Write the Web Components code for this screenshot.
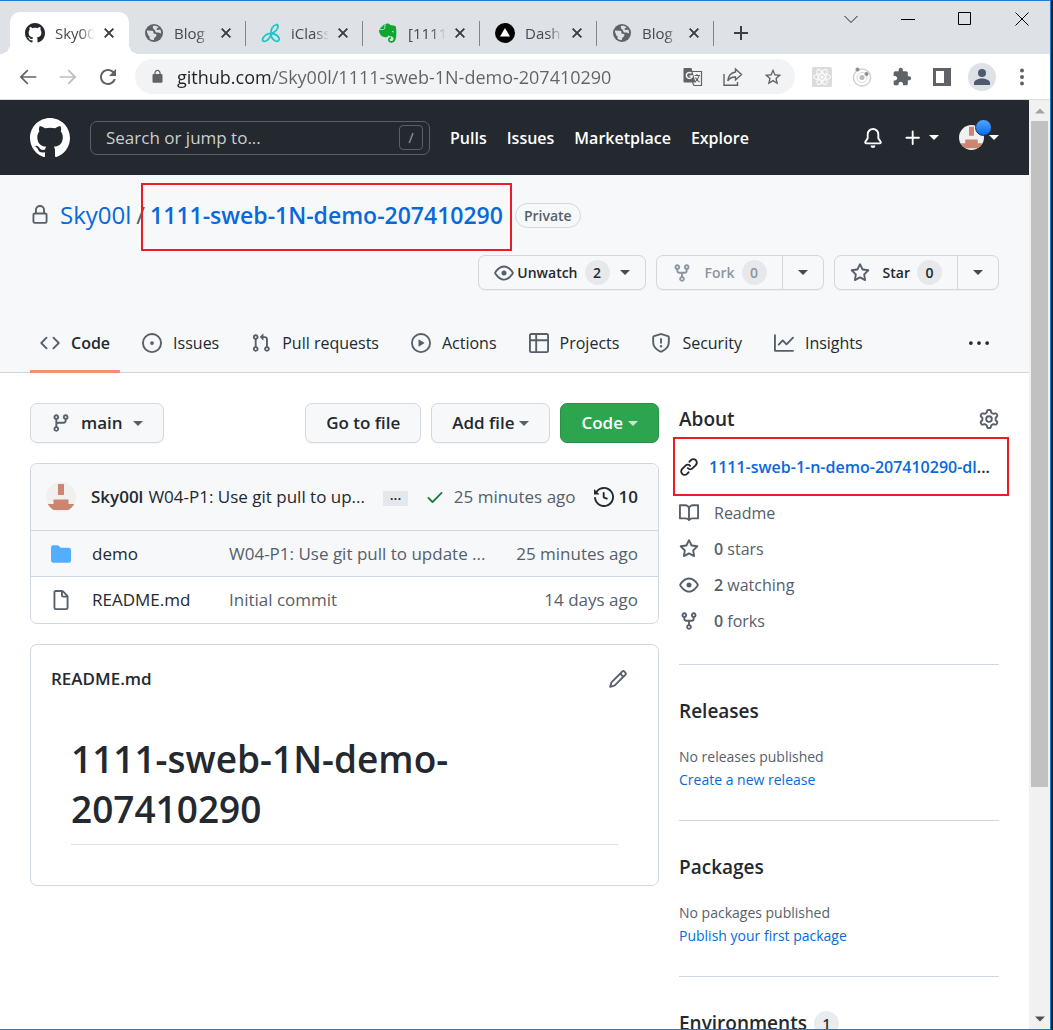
<!DOCTYPE html>
<html lang="en">
<head>
<meta charset="utf-8">
<title>Sky00l/1111-sweb-1N-demo-207410290</title>
<style>
  html, body { height: 100%; }
  body { margin: 0; background: #1b1f24; font-family: "Open Sans", "Noto Sans", sans-serif; font-size: 16px; line-height: 24px; color: #24292f; overflow: hidden; }
</style>
</head>
<body>
<browser-window>
  <browser-tab slot="tabs" icon="github" active>Sky00l</browser-tab>
  <browser-tab slot="tabs" icon="globe">Blog</browser-tab>
  <browser-tab slot="tabs" icon="iclass">iClass</browser-tab>
  <browser-tab slot="tabs" icon="evernote">[1111</browser-tab>
  <browser-tab slot="tabs" icon="vercel">Dash</browser-tab>
  <browser-tab slot="tabs" icon="globe">Blog</browser-tab>
  <browser-toolbar slot="toolbar"></browser-toolbar>
  <site-header></site-header>
  <repo-header></repo-header>
  <repo-layout>
    <branch-bar></branch-bar>
    <file-list></file-list>
    <readme-card></readme-card>
    <about-panel slot="side"></about-panel>
    <side-section slot="side" heading="Releases">No releases published<a slot="link" href="#">Create a new release</a></side-section>
    <side-section slot="side" heading="Packages">No packages published<a slot="link" href="#">Publish your first package</a></side-section>
    <side-section slot="side" heading="Environments" count="1"></side-section>
  </repo-layout>
</browser-window>

<script>
const ICONS = {
  github: [16, '<path d="M8 0C3.58 0 0 3.58 0 8c0 3.54 2.29 6.53 5.47 7.59.4.07.55-.17.55-.38 0-.19-.01-.82-.01-1.49-2.01.37-2.53-.49-2.69-.94-.09-.23-.48-.94-.82-1.13-.28-.15-.68-.52-.01-.53.63-.01 1.08.58 1.23.82.72 1.21 1.87.87 2.33.66.07-.52.28-.87.51-1.07-1.78-.2-3.64-.89-3.64-3.95 0-.87.31-1.59.82-2.15-.08-.2-.36-1.02.08-2.12 0 0 .67-.21 2.2.82.64-.18 1.32-.27 2-.27.68 0 1.36.09 2 .27 1.53-1.04 2.2-.82 2.2-.82.44 1.1.16 1.92.08 2.12.51.56.82 1.27.82 2.15 0 3.07-1.87 3.75-3.65 3.95.29.25.54.73.54 1.48 0 1.07-.01 1.93-.01 2.2 0 .21.15.46.55.38A8.013 8.013 0 0016 8c0-4.42-3.58-8-8-8z"/>'],
  lock: [16, '<path d="M4 4v2h-.25A1.75 1.75 0 002 7.75v5.5c0 .966.784 1.75 1.75 1.75h8.5A1.75 1.75 0 0014 13.25v-5.5A1.75 1.75 0 0012.25 6H12V4a4 4 0 10-8 0zm6.5 2V4a2.5 2.5 0 10-5 0v2h5zM12 7.5h.25a.25.25 0 01.25.25v5.5a.25.25 0 01-.25.25h-8.5a.25.25 0 01-.25-.25v-5.5a.25.25 0 01.25-.25H12z"/>'],
  eye: [16, '<path d="M1.679 7.932c.412-.621 1.242-1.75 2.366-2.717C5.175 4.242 6.527 3.5 8 3.5c1.473 0 2.824.742 3.955 1.715 1.124.967 1.954 2.096 2.366 2.717a.119.119 0 010 .136c-.412.621-1.242 1.75-2.366 2.717C10.825 11.758 9.473 12.5 8 12.5c-1.473 0-2.824-.742-3.955-1.715C2.92 9.818 2.09 8.69 1.679 8.068a.119.119 0 010-.136zM8 2c-1.981 0-3.67.992-4.933 2.078C1.797 5.169.88 6.423.43 7.1a1.619 1.619 0 000 1.798c.45.678 1.367 1.932 2.637 3.024C4.329 13.008 6.019 14 8 14c1.981 0 3.67-.992 4.933-2.078 1.27-1.091 2.187-2.345 2.637-3.023a1.619 1.619 0 000-1.798c-.45-.678-1.367-1.932-2.637-3.023C11.671 2.992 9.981 2 8 2zm0 8a2 2 0 100-4 2 2 0 000 4z"/>'],
  fork: [16, '<path d="M5 3.25a.75.75 0 11-1.5 0 .75.75 0 011.5 0zm0 2.122a2.25 2.25 0 10-1.5 0v.878A2.25 2.25 0 005.75 8.5h1.5v2.128a2.251 2.251 0 101.5 0V8.5h1.5a2.25 2.25 0 002.25-2.25v-.878a2.25 2.25 0 10-1.5 0v.878a.75.75 0 01-.75.75h-4.5A.75.75 0 015 6.25v-.878zm3.75 7.378a.75.75 0 11-1.5 0 .75.75 0 011.5 0zm3-8.75a.75.75 0 100-1.5.75.75 0 000 1.5z"/>'],
  star: [16, '<path d="M8 .25a.75.75 0 01.673.418l1.882 3.815 4.21.612a.75.75 0 01.416 1.279l-3.046 2.97.719 4.192a.75.75 0 01-1.088.791L8 12.347l-3.766 1.98a.75.75 0 01-1.088-.79l.72-4.194L.818 6.374a.75.75 0 01.416-1.28l4.21-.611L7.327.668A.75.75 0 018 .25zm0 2.445L6.615 5.5a.75.75 0 01-.564.41l-3.097.45 2.24 2.184a.75.75 0 01.216.664l-.528 3.084 2.769-1.456a.75.75 0 01.698 0l2.77 1.456-.53-3.084a.75.75 0 01.216-.664l2.24-2.183-3.096-.45a.75.75 0 01-.564-.41L8 2.694v.001z"/>'],
  code: [16, '<path d="M4.72 3.22a.75.75 0 011.06 1.06L2.06 8l3.72 3.72a.75.75 0 11-1.06 1.06L.47 8.53a.75.75 0 010-1.06l4.25-4.25zm6.56 0a.75.75 0 10-1.06 1.06L13.94 8l-3.72 3.72a.75.75 0 101.06 1.06l4.25-4.25a.75.75 0 000-1.06l-4.25-4.25z"/>'],
  issue: [16, '<path d="M8 9.5a1.5 1.5 0 100-3 1.5 1.5 0 000 3z"/><path d="M8 0a8 8 0 100 16A8 8 0 008 0zM1.5 8a6.5 6.5 0 1113 0 6.5 6.5 0 01-13 0z"/>'],
  pull: [16, '<path d="M7.177 3.073L9.573.677A.25.25 0 0110 .854v4.792a.25.25 0 01-.427.177L7.177 3.427a.25.25 0 010-.354zM3.75 2.5a.75.75 0 100 1.5.75.75 0 000-1.5zm-2.25.75a2.25 2.25 0 113 2.122v5.256a2.251 2.251 0 11-1.5 0V5.372A2.25 2.25 0 011.5 3.25zM11 2.5h-1V4h1a1 1 0 011 1v5.628a2.251 2.251 0 101.5 0V5A2.5 2.5 0 0011 2.5zm1 10.25a.75.75 0 111.5 0 .75.75 0 01-1.5 0zM3.75 12a.75.75 0 100 1.5.75.75 0 000-1.5z"/>'],
  play: [16, '<path d="M1.5 8a6.5 6.5 0 1113 0 6.5 6.5 0 01-13 0zM8 0a8 8 0 100 16A8 8 0 008 0zM6.379 5.227A.25.25 0 006 5.442v5.117a.25.25 0 00.379.214l4.264-2.559a.25.25 0 000-.428L6.379 5.227z"/>'],
  table: [16, '<path d="M0 1.75C0 .784.784 0 1.75 0h12.5C15.216 0 16 .784 16 1.75v12.5A1.75 1.75 0 0114.25 16H1.75A1.75 1.75 0 010 14.25V1.75zM1.5 6.5v7.75c0 .138.112.25.25.25H5v-8H1.5zM5 5H1.5V1.75a.25.25 0 01.25-.25H5V5zm1.5 1.5v8h7.75a.25.25 0 00.25-.25V6.5h-8zm8-1.5h-8V1.5h7.75a.25.25 0 01.25.25V5z"/>'],
  shield: [16, '<path d="M7.467.133a1.75 1.75 0 011.066 0l5.25 1.68A1.75 1.75 0 0115 3.48V7c0 1.566-.32 3.182-1.303 4.682-.983 1.498-2.585 2.813-5.032 3.855a1.7 1.7 0 01-1.33 0c-2.447-1.042-4.049-2.357-5.032-3.855C1.32 10.182 1 8.566 1 7V3.48a1.75 1.75 0 011.217-1.667l5.25-1.68zm.61 1.429a.25.25 0 00-.153 0l-5.25 1.68a.25.25 0 00-.174.238V7c0 1.358.275 2.666 1.057 3.86.784 1.194 2.121 2.34 4.366 3.297a.2.2 0 00.154 0c2.245-.956 3.582-2.104 4.366-3.298C13.225 9.666 13.5 8.36 13.5 7V3.48a.25.25 0 00-.174-.237l-5.25-1.68zM9 10.5a1 1 0 11-2 0 1 1 0 012 0zm-.25-5.75a.75.75 0 10-1.5 0v3a.75.75 0 001.5 0v-3z"/>'],
  graph: [16, '<path d="M1.5 1.75a.75.75 0 00-1.5 0v12.5c0 .414.336.75.75.75h14.5a.75.75 0 000-1.5H1.5V1.75zm14.28 2.53a.75.75 0 00-1.06-1.06L10 7.94 7.53 5.47a.75.75 0 00-1.06 0L3.22 8.72a.75.75 0 001.06 1.06L7 7.06l2.47 2.47a.75.75 0 001.06 0l5.25-5.25z"/>'],
  dots: [16, '<circle cx="1.5" cy="8" r="1.5"/><circle cx="8" cy="8" r="1.5"/><circle cx="14.5" cy="8" r="1.5"/>'],
  branch: [16, '<path d="M11.75 2.5a.75.75 0 100 1.5.75.75 0 000-1.5zm-2.25.75a2.25 2.25 0 113 2.122V6A2.5 2.5 0 0110 8.5H6a1 1 0 00-1 1v1.128a2.251 2.251 0 11-1.5 0V5.372a2.25 2.25 0 111.5 0v1.836A2.492 2.492 0 016 7h4a1 1 0 001-1v-.628A2.25 2.25 0 019.5 3.25zM4.25 12a.75.75 0 100 1.5.75.75 0 000-1.5zM3.5 3.25a.75.75 0 111.5 0 .75.75 0 01-1.5 0z"/>'],
  check: [16, '<path d="M13.78 4.22a.75.75 0 010 1.06l-7.25 7.25a.75.75 0 01-1.06 0L2.22 9.28a.75.75 0 011.06-1.06L6 10.94l6.72-6.72a.75.75 0 011.06 0z"/>'],
  history: [16, '<path d="M1.643 3.143L.427 1.927A.25.25 0 000 2.104V5.75c0 .138.112.25.25.25h3.646a.25.25 0 00.177-.427L2.715 4.215a6.5 6.5 0 11-1.18 4.458.75.75 0 10-1.493.154 8.001 8.001 0 101.6-5.684zM7.75 4a.75.75 0 01.75.75v2.992l2.028.812a.75.75 0 01-.557 1.392l-2.5-1A.75.75 0 017 8.25v-3.5A.75.75 0 017.75 4z"/>'],
  folder: [16, '<path d="M1.75 1A1.75 1.75 0 000 2.75v10.5C0 14.216.784 15 1.75 15h12.5A1.75 1.75 0 0016 13.25v-8.5A1.75 1.75 0 0014.25 3h-6.5a.25.25 0 01-.2-.1l-.9-1.2C6.07 1.22 5.55 1 5 1H1.75z"/>'],
  file: [16, '<path d="M3.75 1.5a.25.25 0 00-.25.25v12.5c0 .138.112.25.25.25h8.5a.25.25 0 00.25-.25V6h-2.75A1.75 1.75 0 018 4.25V1.5H3.75zm5.75.56v2.19c0 .138.112.25.25.25h2.19L9.5 2.06zM2 1.75C2 .784 2.784 0 3.75 0h5.086c.464 0 .909.184 1.237.513l3.414 3.414c.329.328.513.773.513 1.237v9.086A1.75 1.75 0 0112.25 16h-8.5A1.75 1.75 0 012 14.25V1.75z"/>'],
  pencil: [16, '<path d="M11.013 1.427a1.75 1.75 0 012.474 0l1.086 1.086a1.75 1.75 0 010 2.474l-8.61 8.61c-.21.21-.47.364-.756.445l-3.251.93a.75.75 0 01-.927-.928l.929-3.25a1.75 1.75 0 01.445-.758l8.61-8.61zm1.414 1.06a.25.25 0 00-.354 0L10.811 3.75l1.439 1.44 1.263-1.263a.25.25 0 000-.354l-1.086-1.086zM11.189 6.25L9.75 4.81l-6.286 6.287a.25.25 0 00-.064.108l-.558 1.953 1.953-.558a.249.249 0 00.108-.064l6.286-6.286z"/>'],
  gear: [16, '<path d="M7.429 1.525a6.593 6.593 0 011.142 0c.036.003.108.036.137.146l.289 1.105c.147.56.55.967.997 1.189.174.086.341.183.501.29.417.278.97.423 1.53.27l1.102-.303c.11-.03.175.016.195.046.219.31.41.641.573.989.014.031.022.11-.059.19l-.815.806c-.411.406-.562.957-.53 1.456a4.588 4.588 0 010 .582c-.032.499.119 1.05.53 1.456l.815.806c.08.08.073.159.059.19a6.494 6.494 0 01-.573.99c-.02.029-.086.074-.195.045l-1.103-.303c-.559-.153-1.112-.008-1.529.27-.16.107-.327.204-.5.29-.449.222-.851.628-.998 1.189l-.289 1.105c-.029.11-.101.143-.137.146a6.613 6.613 0 01-1.142 0c-.036-.003-.108-.037-.137-.146l-.289-1.105c-.147-.56-.55-.967-.997-1.189a4.502 4.502 0 01-.501-.29c-.417-.278-.97-.423-1.53-.27l-1.102.303c-.11.03-.175-.016-.195-.046a6.492 6.492 0 01-.573-.989c-.014-.031-.022-.11.059-.19l.815-.806c.411-.406.562-.957.53-1.456a4.587 4.587 0 010-.582c.032-.499-.119-1.05-.53-1.456l-.815-.806c-.08-.08-.073-.159-.059-.19a6.44 6.44 0 01.573-.99c.02-.029.086-.075.195-.045l1.103.303c.559.153 1.112.008 1.529-.27.16-.107.327-.204.5-.29.449-.222.851-.628.998-1.189l.289-1.105c.029-.11.101-.143.137-.146zM8 0c-.236 0-.47.01-.701.03-.743.065-1.29.615-1.458 1.261l-.29 1.106c-.017.066-.078.158-.211.224a5.994 5.994 0 00-.668.386c-.123.082-.233.09-.3.071L3.27 2.776c-.644-.177-1.392.02-1.82.63a7.977 7.977 0 00-.704 1.217c-.315.675-.111 1.422.363 1.891l.815.806c.05.048.098.147.088.294a6.084 6.084 0 000 .772c.01.147-.038.246-.088.294l-.815.806c-.474.469-.678 1.216-.363 1.891.2.428.436.835.704 1.218.428.609 1.176.806 1.82.63l1.103-.303c.066-.019.176-.011.299.071.213.143.436.272.668.386.133.066.194.158.212.224l.289 1.106c.169.646.715 1.196 1.458 1.26a8.094 8.094 0 001.402 0c.743-.064 1.29-.614 1.458-1.26l.29-1.106c.017-.066.078-.158.211-.224a5.98 5.98 0 00.668-.386c.123-.082.233-.09.3-.071l1.102.302c.644.177 1.392-.02 1.82-.63.268-.382.505-.789.704-1.217.315-.675.111-1.422-.364-1.891l-.814-.806c-.05-.048-.098-.147-.088-.294a6.1 6.1 0 000-.772c-.01-.147.039-.246.088-.294l.814-.806c.475-.469.679-1.216.364-1.891a7.992 7.992 0 00-.704-1.218c-.428-.609-1.176-.806-1.82-.63l-1.103.303c-.066.019-.176.011-.299-.071a5.991 5.991 0 00-.668-.386c-.133-.066-.194-.158-.212-.224L10.16 1.29C9.99.645 9.444.095 8.701.031A8.094 8.094 0 008 0zm1.5 8a1.5 1.5 0 11-3 0 1.5 1.5 0 013 0zM11 8a3 3 0 11-6 0 3 3 0 016 0z"/>'],
  link: [16, '<path d="M7.775 3.275a.75.75 0 001.06 1.06l1.25-1.25a2 2 0 112.83 2.83l-2.5 2.5a2 2 0 01-2.83 0 .75.75 0 00-1.06 1.06 3.5 3.5 0 004.95 0l2.5-2.5a3.5 3.5 0 00-4.95-4.95l-1.25 1.25zm-4.69 9.64a2 2 0 010-2.83l2.5-2.5a2 2 0 012.83 0 .75.75 0 001.06-1.06 3.5 3.5 0 00-4.95 0l-2.5 2.5a3.5 3.5 0 004.95 4.95l1.25-1.25a.75.75 0 00-1.06-1.06l-1.25 1.25a2 2 0 01-2.83 0z"/>'],
  book: [16, '<path d="M0 1.75A.75.75 0 01.75 1h4.253c1.227 0 2.317.59 3 1.501A3.744 3.744 0 0111.006 1h4.245a.75.75 0 01.75.75v10.5a.75.75 0 01-.75.75h-4.507a2.25 2.25 0 00-1.591.659l-.622.621a.75.75 0 01-1.06 0l-.622-.621A2.25 2.25 0 005.258 13H.75a.75.75 0 01-.75-.75V1.75zm8.755 3a2.25 2.25 0 012.25-2.25H14.5v9h-3.757c-.71 0-1.4.201-1.992.572l.004-7.322zm-1.504 7.324l.004-5.073-.002-2.253A2.25 2.25 0 005.003 2.5H1.5v9h3.757a3.75 3.75 0 011.994.574z"/>'],
  bell: [16, '<path d="M8 16a2 2 0 001.985-1.75c.017-.137-.097-.25-.235-.25h-3.5c-.138 0-.252.113-.235.25A2 2 0 008 16z"/><path d="M8 1.5A3.5 3.5 0 004.5 5v2.947c0 .346-.102.683-.294.97l-1.703 2.556a.018.018 0 00-.003.01l.001.006c0 .002.002.004.004.006a.017.017 0 00.006.004l.007.001h10.964l.007-.001a.016.016 0 00.006-.004.016.016 0 00.004-.006l.001-.007a.017.017 0 00-.003-.01l-1.703-2.554a1.75 1.75 0 01-.294-.97V5A3.5 3.5 0 008 1.5zM3 5a5 5 0 0110 0v2.947c0 .05.015.098.042.139l1.703 2.555A1.518 1.518 0 0113.482 13H2.518a1.518 1.518 0 01-1.263-2.36l1.703-2.554A.25.25 0 003 7.947V5z"/>'],
  plus: [16, '<path d="M7.75 2a.75.75 0 01.75.75V7h4.25a.75.75 0 110 1.5H8.5v4.25a.75.75 0 11-1.5 0V8.5H2.75a.75.75 0 010-1.5H7V2.75A.75.75 0 017.75 2z"/>'],
  globe: [20, '<circle cx="10" cy="10" r="9"/><path fill="#dee1e6" d="M3 7.5l5 .3c1.500 .2 1.700 1.500 1.400 2.600l2.400.7c.9.5.8 1.700.1 2.400l-1.700 1.500-.3 2c-1.500.2-3-.2-4.200-1l-.2-2.700c-1-.5-1.700-1.200-1.600-2.300L2.900 9z"/><path fill="#dee1e6" d="M9 3c2-.4 4 .1 5.500 1.400l-1.800 1c-.3 1 .2 1.700 1.200 1.500l2.300-.3c.7 1.100.9 2.500.8 3.800l-2.500-.9c-1-.2-1.900.2-2.600-.3-.9-.7-.7-2-1.600-2.600C9.300 5.900 8.400 4.600 9 3z"/>'],
  iclass: [20, '<g fill="none" stroke="#1fc8c8" stroke-width="1.800"><path d="M10.500 10.500C9 7.500 11.500 2.500 15.500 1.500c2.500.5 1.500 3.500 0 5.500-1.500 1.800-3.500 2.800-5 3.500z"/><path d="M10.500 10.500C6 10 2 13.500 1.500 16.500c0 2.500 3 2.300 4.800.7 1.900-1.600 3.400-4 4.200-6.700z"/><path d="M10.500 10.500c-.8 2.500.5 5.500 4 7.500 2.500 1 4.500-1 3.500-3-1.200-2.500-4.500-4.200-7.500-4.500z"/></g>'],
  evernote: [20, '<g fill="#0ca82e"><path d="M6.500 1v3.200c0 1.200-.6 1.800-1.800 1.800H1.500z"/><path d="M7.400 3.800V1.200C7.800.5 9 .2 10.200.5c1 .2 1.700.7 2 1.400 2 .3 4.500.4 5.200 1.200 1.100 1.500 1.300 8 .6 11.700-.5 3-1.700 4.800-4.300 4.900-2.500 0-3.600-1.300-3.600-3s1.200-2.800 2.900-2.700v1.700c-.8 0-1.300.4-1.300 1.100 0 .8.700 1.200 1.900 1.200 1.400-.1 2-1 1.900-2.500-.1-1.300-1-2-3-2.200-.8 0-1.500-.4-2-1.100-.4 1.500-1.800 2.200-3.600 2-2.500-.3-4.500-1.600-5.300-4.100C1 8.500.9 7.500 1.300 6.700h3.500c1.700 0 2.600-1.200 2.600-2.900z"/></g><path fill="#dee1e6" d="M13.800 9c.3-1.300 1.800-1.300 2 .4-.6-.2-1.300-.3-2-.4z"/>'],
  vercel: [20, '<circle cx="10" cy="10" r="10" fill="#000"/><path fill="#fff" d="M10 5l5 8.500H5z"/>'],
  close: [24, '<path d="M19 6.410L17.590 5 12 10.590 6.410 5 5 6.410 10.590 12 5 17.590 6.410 19 12 13.410 17.590 19 19 17.590 13.410 12z" stroke="currentColor"/>'],
  add: [16, '<path d="M7 1h2v6h6v2H9v6H7V9H1V7h6z"/>'],
  back: [24, '<path d="M22 11H5.830l6.590-6.590L11 3l-9 9 9 9 1.410-1.410L5.830 13H22v-2z"/>'],
  forward: [24, '<path d="M2 11h16.170l-6.590-6.590L13 3l9 9-9 9-1.410-1.410L18.170 13H2v-2z"/>'],
  reload: [24, '<path d="M17.650 6.350C16.200 4.900 14.210 4 12 4c-4.420 0-7.990 3.580-7.990 8s3.570 8 7.990 8c3.730 0 6.840-2.550 7.730-6h-2.080c-.82 2.330-3.040 4-5.650 4-3.310 0-6-2.690-6-6s2.690-6 6-6c1.660 0 3.140.69 4.220 1.780L13 11h7V4l-2.350 2.350z"/>'],
  padlock: [24, '<path d="M18 8h-1V6c0-2.760-2.240-5-5-5S7 3.240 7 6v2H6c-1.100 0-2 .9-2 2v10c0 1.100.9 2 2 2h12c1.100 0 2-.9 2-2V10c0-1.100-.9-2-2-2zm-9 0V6c0-1.660 1.340-3 3-3s3 1.340 3 3v2H9z"/>'],
  translate: [20, '<path d="M9 4.500h9.500v14H11l-1.500-3" fill="none" stroke="currentColor" stroke-width="1.200"/><path d="M1.500 1h7l4 14.500h-11C.8 15.500.5 15 .5 14.500V2c0-.6.4-1 1-1z"/><path d="M8.500 6.300A3 3 0 1 0 9.300 9H6.500" fill="none" stroke="#f1f3f4" stroke-width="1.500"/><path d="M11.500 8.500h5.500M14 7v1.500M16 8.500c-.5 3-2 5-4 6.500M12.500 10.500c.8 2 2.200 3.500 4 4.500" fill="none" stroke="currentColor" stroke-width="1.100"/>'],
  share: [20, '<g fill="none" stroke="currentColor" stroke-width="1.400"><path d="M1 7v11.300h13.500V15"/><path d="M12.500 2l6 5.500-6 5.500V10C9 9.800 6.500 11 4.800 14c.4-4.500 3-8.300 7.700-9z"/></g>'],
  bookmark: [24, '<path d="M22 9.240l-7.190-.62L12 2 9.190 8.630 2 9.240l5.460 4.730L5.820 21 12 17.270 18.180 21l-1.630-7.030L22 9.240zM12 15.400l-3.760 2.270 1-4.280-3.320-2.880 4.380-.38L12 6.100l1.710 4.040 4.380.38-3.320 2.880 1 4.280L12 15.400z"/>'],
  react: [20, '<rect width="20" height="20" rx="1.500" fill="#dcdcdc"/><g fill="none" stroke="#fff" stroke-width="1"><ellipse cx="10" cy="10" rx="8.500" ry="3.200"/><ellipse cx="10" cy="10" rx="8.500" ry="3.200" transform="rotate(60 10 10)"/><ellipse cx="10" cy="10" rx="8.500" ry="3.200" transform="rotate(120 10 10)"/></g><circle cx="10" cy="10" r="1.500" fill="#fff"/>'],
  orbit: [20, '<circle cx="10" cy="10.500" r="8.600" fill="none" stroke="#d0d0d0" stroke-width="1.500"/><circle cx="10" cy="10.500" r="5" fill="none" stroke="#d8d8d8" stroke-width="1"/><circle cx="10" cy="10.500" r="2.500" fill="#bbb"/><circle cx="5.500" cy="2.500" r="2" fill="#8f8f8f"/><circle cx="14.500" cy="7" r="2" fill="#8f8f8f"/>'],
  puzzle: [24, '<path d="M20.500 11H19V7c0-1.100-.9-2-2-2h-4V3.500C13 2.120 11.880 1 10.500 1S8 2.120 8 3.500V5H4c-1.100 0-1.990.9-1.990 2v3.800H3.500c1.490 0 2.700 1.210 2.700 2.700s-1.210 2.700-2.700 2.700H2V20c0 1.100.9 2 2 2h3.800v-1.500c0-1.490 1.210-2.700 2.700-2.700 1.490 0 2.700 1.210 2.700 2.700V22H17c1.100 0 2-.9 2-2v-4h1.500c1.380 0 2.500-1.120 2.500-2.500S21.880 11 20.500 11z"/>'],
  panel: [20, '<path d="M1 1h18v18H1zM4 4v12h8V4z"/>'],
  person: [28, '<circle cx="14" cy="14" r="14" fill="#dee1e6"/><g fill="#4e5a6e"><circle cx="14" cy="10" r="4"/><path d="M6 22v-2c0-2.800 4.500-4.500 8-4.500s8 1.700 8 4.500v2z"/></g>'],
  menu: [20, '<circle cx="10" cy="3.500" r="2"/><circle cx="10" cy="10" r="2"/><circle cx="10" cy="16.500" r="2"/>'],
  winDown: [20, '<path d="M3.500 7l6.500 6.500L16.500 7" fill="none" stroke="#222" stroke-width="1"/>'],
  winMin: [20, '<path d="M3 10h14v1H3z" fill="#000"/>'],
  winMax: [20, '<path d="M3.500 3.500h12v12h-12z" fill="none" stroke="#000"/>'],
  winClose: [20, '<path d="M3.500 3.500l13 13M16.500 3.500l-13 13" fill="none" stroke="#000" stroke-width="1"/>'],
  scrollUp: [10, '<path d="M0 7.500l5-5 5 5z"/>'],
  scrollDown: [10, '<path d="M0 2.500l5 5 5-5z"/>'],
  avatar: [30, '<defs><clipPath id="c"><circle cx="15" cy="15" r="15"/></clipPath></defs><g clip-path="url(#c)"><path fill="#f0f0f0" d="M0 0h30v30H0z"/><path fill="#cc8571" d="M12 2h6v11h-6zM7.500 17.500h15V22H28v6H2v-6h5.500z"/></g>']
};

/* Shared rules copied into every shadow root */
const BASE = `
  :host, *, *::before, *::after { box-sizing: border-box; }
  button, input { font: inherit; color: inherit; margin: 0; }
  button { display: inline-flex; align-items: center; justify-content: center; border: 0; padding: 0; background: none; white-space: nowrap; cursor: pointer; }
  a { color: inherit; text-decoration: none; }
  h1, h2, p, ul { margin: 0; padding: 0; }
  ul { list-style: none; }
  .caret { display: inline-block; border: 5px solid transparent; border-top-color: currentColor; border-bottom: 0; }
`;

function define(name, css, html) {
  customElements.define(name, class extends HTMLElement {
    connectedCallback() {
      if (this.shadowRoot) return;
      const t = document.createElement('template');
      t.innerHTML = `<style>${BASE}${css}</style>${typeof html === 'function' ? html(this) : html}`;
      this.attachShadow({ mode: 'open' }).append(t.content.cloneNode(true));
    }
  });
}

define('ui-icon', `
  :host { display: inline-flex; flex: none; width: 20px; height: 20px; }
  svg { width: 100%; height: 100%; display: block; overflow: visible; }
`, el => {
  const [box, art] = ICONS[el.getAttribute('name')];
  return `<svg viewBox="0 0 ${box} ${box}" fill="currentColor" fill-rule="evenodd" aria-hidden="true">${art}</svg>`;
});

define('browser-window', `
  :host { display: flex; flex-direction: column; height: 100vh; margin-right: 2px; border: solid #1a7fd4; border-width: 1px 1px 1px 0; background: #fff; }
  .strip { display: flex; align-items: flex-end; height: 53px; padding-left: 10px; background: #dee1e6; flex: none; }
  .tabs { display: flex; min-width: 0; }
  .add { width: 20px; height: 42px; margin-left: 17px; color: #3c4043; }
  .add ui-icon { width: 16px; height: 16px; }
  .win { display: flex; align-self: flex-start; margin-left: auto; }
  .win button { width: 57px; height: 36px; }
  .view { display: flex; flex: 1; min-height: 0; }
  .page { flex: 1; min-width: 0; overflow: hidden; }
  .bar { display: flex; flex-direction: column; align-items: center; width: 21px; background: #f1f1f1; padding: 6px 0 5px; gap: 5px; }
  .bar ui-icon { width: 10px; height: 10px; color: #505050; }
  .bar ui-icon:first-child { color: #a3a3a3; }
  .track { flex: 1; width: 17px; }
  .thumb { height: 75%; background: #c1c1c1; }
`, `
  <div class="strip">
    <div class="tabs"><slot name="tabs"></slot></div>
    <button class="add" aria-label="New tab"><ui-icon name="add"></ui-icon></button>
    <div class="win">
      <button aria-label="Search tabs"><ui-icon name="winDown"></ui-icon></button>
      <button aria-label="Minimize"><ui-icon name="winMin"></ui-icon></button>
      <button aria-label="Maximize"><ui-icon name="winMax"></ui-icon></button>
      <button aria-label="Close"><ui-icon name="winClose"></ui-icon></button>
    </div>
  </div>
  <slot name="toolbar"></slot>
  <div class="view">
    <div class="page"><slot></slot></div>
    <div class="bar"><ui-icon name="scrollUp"></ui-icon><div class="track"><div class="thumb"></div></div><ui-icon name="scrollDown"></ui-icon></div>
  </div>
`);

define('browser-tab', `
  :host { display: flex; align-items: center; width: 117px; height: 42px; padding: 0 10px 0 15px; position: relative; color: #45494d; font-size: 15px; }
  :host([active]) { width: 119px; background: #fff; border-radius: 10px 10px 0 0; }
  :host([active])::after { content: ""; position: absolute; left: 100%; bottom: 0; width: 10px; height: 10px; background: radial-gradient(circle at 100% 0, #dee1e6 10px, #fff 10px); }
  :host([active])::before { content: ""; position: absolute; right: 100%; bottom: 0; width: 10px; height: 10px; background: radial-gradient(circle at 0 0, #dee1e6 10px, #fff 10px); }
  .icon { margin-right: 10px; color: #5f6368; }
  :host([active]) .icon { color: #24292f; }
  .label { flex: 1; min-width: 0; overflow: hidden; white-space: nowrap; mask-image: linear-gradient(90deg, #000 60%, transparent 97%); }
  button { width: 20px; height: 20px; margin-left: 3px; color: #3c4043; }
  button ui-icon { width: 16px; height: 16px; }
  .sep { position: absolute; right: 0; top: 9px; width: 1px; height: 25px; background: #80868b; }
  :host([active]) .sep { display: none; }
`, el => `
  <ui-icon class="icon" name="${el.getAttribute('icon')}"></ui-icon>
  <span class="label"><slot></slot></span>
  <button aria-label="Close tab"><ui-icon name="close"></ui-icon></button>
  <span class="sep"></span>
`);

define('browser-toolbar', `
  :host { display: flex; align-items: center; flex: none; height: 46px; padding: 0 18px; border-bottom: 1px solid #dadce0; background: #fff; color: #5f6368; }
  .nav { display: flex; gap: 20px; margin-right: 17px; }
  .nav .off { color: #bcbfc2; }
  .nav .reload ui-icon { width: 24px; height: 24px; }
  .nav button { width: 20px; }
  .pill { display: flex; align-items: center; flex: 1; height: 35px; padding: 0 12px 0 15px; border-radius: 18px; background: #f1f3f4; gap: 20px; }
  .pill .padlock { width: 15px; height: 15px; margin-right: -8px; }
  input { flex: 1; min-width: 0; height: 28px; padding: 0; border: 0; outline: 0; color: #5f6368; font-size: 18px;
    background: linear-gradient(90deg, #202124 96px, #5f6368 96px); -webkit-background-clip: text; background-clip: text; -webkit-text-fill-color: transparent; }
  .ext { display: flex; align-items: center; gap: 20px; margin-left: 17px; }
  .ext .me, .ext .me ui-icon { width: 28px; height: 28px; }
  .ext .me { margin: 0 -4px 0 -4px; }
`, `
  <div class="nav">
    <button aria-label="Back"><ui-icon name="back"></ui-icon></button>
    <button class="off" aria-label="Forward"><ui-icon name="forward"></ui-icon></button>
    <button class="reload" aria-label="Reload"><ui-icon name="reload"></ui-icon></button>
  </div>
  <div class="pill">
    <ui-icon class="padlock" name="padlock"></ui-icon>
    <input aria-label="Address" value="github.com/Sky00l/1111-sweb-1N-demo-207410290">
    <button aria-label="Translate"><ui-icon name="translate"></ui-icon></button>
    <button aria-label="Share"><ui-icon name="share"></ui-icon></button>
    <button aria-label="Bookmark"><ui-icon name="bookmark"></ui-icon></button>
  </div>
  <div class="ext">
    <button aria-label="React extension"><ui-icon name="react"></ui-icon></button>
    <button aria-label="Orbit extension"><ui-icon name="orbit"></ui-icon></button>
    <button aria-label="Extensions"><ui-icon name="puzzle"></ui-icon></button>
    <button aria-label="Side panel"><ui-icon name="panel"></ui-icon></button>
    <button class="me" aria-label="Profile"><ui-icon name="person"></ui-icon></button>
    <button aria-label="Menu"><ui-icon name="menu"></ui-icon></button>
  </div>
`);

define('site-header', `
  :host { display: flex; align-items: center; gap: 20px; height: 75px; padding: 0 30px; background: #24292f; color: #fff; }
  .logo { display: flex; }
  .logo ui-icon { width: 40px; height: 40px; }
  .search { display: flex; align-items: center; flex: 0 1 340px; height: 34px; padding: 0 6px 0 15px; border: 1px solid #57606a; border-radius: 7px; }
  input { flex: 1; min-width: 0; padding: 0; border: 0; outline: 0; background: none; font-size: 17px; }
  input::placeholder { color: #ccced0; opacity: 1; }
  kbd { width: 24px; height: 25px; border: 1px solid #57606a; border-radius: 4px; text-align: center; font: 14px/23px "Open Sans", sans-serif; color: #a0a5aa; }
  nav { display: flex; gap: 20px; font-weight: 600; }
  .right { display: flex; align-items: center; gap: 20px; margin-left: auto; }
  .plus { gap: 6px; }
  .user { position: relative; gap: 5px; }
  .user ui-icon { width: 25px; height: 25px; }
  .dot { position: absolute; left: 16px; top: -6px; width: 17px; height: 17px; border: 1px solid #24292f; border-radius: 50%; background: linear-gradient(#54a3ff, #006eed); }
`, `
  <a class="logo" href="#" aria-label="Homepage"><ui-icon name="github"></ui-icon></a>
  <label class="search"><input aria-label="Search" placeholder="Search or jump to..."><kbd>/</kbd></label>
  <nav><a href="#">Pulls</a><a href="#">Issues</a><a href="#">Marketplace</a><a href="#">Explore</a></nav>
  <div class="right">
    <button aria-label="Notifications"><ui-icon name="bell"></ui-icon></button>
    <button class="plus" aria-label="Create new"><ui-icon name="plus"></ui-icon><span class="caret"></span></button>
    <button class="user" aria-label="Account"><ui-icon name="avatar"></ui-icon><span class="dot"></span><span class="caret"></span></button>
  </div>
`);

define('count-button', `
  :host { display: flex; height: 35px; border: 1px solid #d3d8dd; border-radius: 7px; background: #f6f8fa; font-size: 14px; font-weight: 600; box-shadow: 0 1px 0 rgba(27,31,36,.04); }
  button { padding: 0 15px; }
  ui-icon { color: #57606a; margin-right: 13px; }
  :host([tight]) ui-icon { margin-right: 3px; }
  .n { min-width: 25px; height: 25px; margin-left: 7px; border-radius: 13px; background: #e6e8eb; line-height: 25px; }
  .caret { color: #424a53; }
  .in { margin-left: 10px; }
  .more { width: 41px; border-left: 1px solid #d3d8dd; }
  :host([muted]) .main { color: #8c959f; }
  :host([muted]) .main ui-icon { color: #8c959f; }
`, el => {
  const tight = el.hasAttribute('tight');
  return `<button class="main"><ui-icon name="${el.getAttribute('icon')}"></ui-icon><slot></slot><span class="n">${el.getAttribute('count')}</span>${tight ? '<span class="caret in"></span>' : ''}</button>
    ${tight ? '' : '<button class="more" aria-label="More options"><span class="caret"></span></button>'}`;
});

define('nav-item', `
  :host { display: flex; }
  a { display: flex; align-items: center; gap: 11px; height: 60px; padding: 0 10px; }
  ui-icon { color: #57606a; }
  :host([current]) a { font-weight: 600; box-shadow: inset 0 -3px #fd8c73; }
`, el => `<a href="#"><ui-icon name="${el.getAttribute('icon')}"></ui-icon><slot></slot></a>`);

define('repo-header', `
  :host { display: block; padding: 20px 30px 0; background: #f6f8fa; box-shadow: inset 0 -1px #d0d7de; }
  .title { display: flex; align-items: center; height: 40px; font-size: 24px; color: #57606a; }
  .title ui-icon { margin-right: 10px; }
  .title h1 { display: flex; align-items: center; gap: 5px; font: inherit; line-height: 24px; }
  .title a { color: #0969da; }
  .repo { position: relative; font-size: 23px; font-weight: 600; }
  .repo::after { content: ""; position: absolute; inset: -20px -9px -24px; border: 2px solid #ed1c24; }
  .label { height: 25px; margin-left: 12px; padding: 0 8px; border: 1px solid #d0d7de; border-radius: 13px; font-size: 14px; line-height: 24px; font-weight: 600; }
  .actions { display: flex; justify-content: flex-end; gap: 10px; margin-top: 20px; }
  nav { display: flex; gap: 12px; margin-top: 23px; }
  .more { margin-left: auto; width: 40px; }
`, `
  <div class="title">
    <ui-icon name="lock"></ui-icon>
    <h1><a href="#">Sky00l</a><span>/</span><a class="repo" href="#">1111-sweb-1N-demo-207410290</a></h1>
    <span class="label">Private</span>
  </div>
  <div class="actions">
    <count-button icon="eye" count="2" tight>Unwatch</count-button>
    <count-button icon="fork" count="0" muted>Fork</count-button>
    <count-button icon="star" count="0">Star</count-button>
  </div>
  <nav>
    <nav-item icon="code" current>Code</nav-item>
    <nav-item icon="issue">Issues</nav-item>
    <nav-item icon="pull">Pull requests</nav-item>
    <nav-item icon="play">Actions</nav-item>
    <nav-item icon="table">Projects</nav-item>
    <nav-item icon="shield">Security</nav-item>
    <nav-item icon="graph">Insights</nav-item>
    <button class="more" aria-label="More"><ui-icon name="dots"></ui-icon></button>
  </nav>
`);

define('repo-layout', `
  :host { display: grid; grid-template-columns: minmax(0, 1fr) 320px; gap: 20px; padding: 30px; }
  main { display: flex; flex-direction: column; gap: 20px; }
`, `<main><slot></slot></main><aside><slot name="side"></slot></aside>`);

define('branch-bar', `
  :host { display: flex; gap: 10px; font-size: 17px; }
  button { height: 40px; padding: 0 20px; border: 1px solid #d3d8dd; border-radius: 7px; background: #f6f8fa; font-weight: 600; box-shadow: 0 1px 0 rgba(27,31,36,.04); gap: 10px; }
  .branch { margin-right: auto; }
  .caret, ui-icon { color: #57606a; }
  .near { gap: 5px; }
  .go { border-color: #2a9147; background: #2da44e; color: #fff; }
  .go .caret { color: #c8e8d0; }
`, `
  <button class="branch"><ui-icon name="branch"></ui-icon>main<span class="caret"></span></button>
  <button>Go to file</button>
  <button class="near">Add file<span class="caret"></span></button>
  <button class="near go">Code<span class="caret"></span></button>
`);

define('file-list', `
  :host { display: block; border: 1px solid #d0d7de; border-radius: 7px; overflow: hidden; font-size: 17px; }
  .commit { display: flex; align-items: center; height: 66px; padding: 0 20px 0 15px; background: #f6f8fa; white-space: nowrap; }
  .commit .face { width: 30px; height: 30px; margin-right: 15px; }
  .commit strong { font-weight: 600; margin-right: 5px; }
  .dots { width: 25px; height: 15px; margin: 2px auto 0 18px; background: #e4e8ed; font-size: 14px; line-height: 10px; font-weight: 600; padding-bottom: 6px; }
  .check { color: #1a7f37; margin-right: 9px; }
  .time { color: #57606a; margin-right: 18px; }
  .hist { display: flex; align-items: center; gap: 5px; font-weight: 600; }
  table { width: 100%; border-collapse: collapse; table-layout: fixed; }
  td { height: 46px; padding: 0; border-top: 1px solid #d0d7de; white-space: nowrap; color: #57606a; }
  tr:first-child { background: #f6f8fa; }
  .ic { width: 61px; padding-left: 20px; }
  .name { width: 137px; color: #24292f; }
  .age { width: 160px; padding-right: 20px; text-align: right; }
  td ui-icon { display: flex; }
  .folder { color: #54aeff; }
`, `
  <div class="commit">
    <ui-icon class="face" name="avatar"></ui-icon>
    <a href="#"><strong>Sky00l</strong></a><a href="#">W04-P1: Use git pull to up...</a>
    <button class="dots" aria-label="Show full message">...</button>
    <ui-icon class="check" name="check"></ui-icon>
    <span class="time">25 minutes ago</span>
    <a class="hist" href="#"><ui-icon name="history"></ui-icon>10</a>
  </div>
  <table>
    <tr><td class="ic"><ui-icon class="folder" name="folder"></ui-icon></td><td class="name"><a href="#">demo</a></td><td><a href="#">W04-P1: Use git pull to update ...</a></td><td class="age">25 minutes ago</td></tr>
    <tr><td class="ic"><ui-icon name="file"></ui-icon></td><td class="name"><a href="#">README.md</a></td><td><a href="#">Initial commit</a></td><td class="age">14 days ago</td></tr>
  </table>
`);

define('readme-card', `
  :host { display: block; border: 1px solid #d0d7de; border-radius: 7px; }
  header { display: flex; align-items: center; justify-content: space-between; height: 69px; padding: 0 30px 0 20px; }
  header h2 { font-size: 17px; font-weight: 600; }
  button { color: #57606a; }
  article { padding: 20px 40px 40px; }
  h1 { padding-bottom: 10px; border-bottom: 1px solid #d8dee4; font-size: 37px; line-height: 50px; font-weight: 600; }
`, `
  <header><h2>README.md</h2><button aria-label="Edit file"><ui-icon name="pencil"></ui-icon></button></header>
  <article><h1>1111-sweb-1N-demo-207410290</h1></article>
`);

define('about-panel', `
  :host { display: block; padding-bottom: 31px; border-bottom: 1px solid #d0d7de; }
  header { display: flex; align-items: center; justify-content: space-between; height: 32px; color: #24292f; }
  h2 { font-size: 19px; font-weight: 600; }
  ui-icon { color: #57606a; }
  .site { position: relative; display: flex; align-items: center; gap: 10px; margin: 20px 0 22px; font-weight: 600; white-space: nowrap; }
  .site::after { content: ""; position: absolute; inset: -18px -10px -17px -6px; border: 2px solid #ed1c24; }
  .site ui-icon { color: #24292f; }
  .site a { color: #0969da; }
  ul { display: grid; gap: 12px; color: #57606a; }
  li a { display: flex; align-items: center; gap: 15px; }
  strong { font-weight: 600; }
`, `
  <header><h2>About</h2><button aria-label="Edit details"><ui-icon name="gear"></ui-icon></button></header>
  <div class="site"><ui-icon name="link"></ui-icon><span><a href="#">1111-sweb-1-n-demo-207410290-dl</a>...</span></div>
  <ul>
    <li><a href="#"><ui-icon name="book"></ui-icon>Readme</a></li>
    <li><a href="#"><ui-icon name="star"></ui-icon><span><strong>0</strong> stars</span></a></li>
    <li><a href="#"><ui-icon name="eye"></ui-icon><span><strong>2</strong> watching</span></a></li>
    <li><a href="#"><ui-icon name="fork"></ui-icon><span><strong>0</strong> forks</span></a></li>
  </ul>
`);

define('side-section', `
  :host { display: block; padding: 30px 0 29px; border-bottom: 1px solid #d0d7de; font-size: 14px; line-height: 23px; color: #57606a; }
  h2 { display: flex; align-items: center; gap: 7px; height: 32px; margin-bottom: 18px; font-size: 19px; font-weight: 600; color: #24292f; }
  .n { min-width: 25px; height: 25px; border-radius: 13px; background: #eaedf0; font-size: 14px; line-height: 25px; text-align: center; }
  ::slotted(a) { display: block; color: #0969da; text-decoration: none; }
`, el => `
  <h2>${el.getAttribute('heading')}${el.hasAttribute('count') ? `<span class="n">${el.getAttribute('count')}</span>` : ''}</h2>
  <slot></slot><slot name="link"></slot>
`);
</script>
</body>
</html>
